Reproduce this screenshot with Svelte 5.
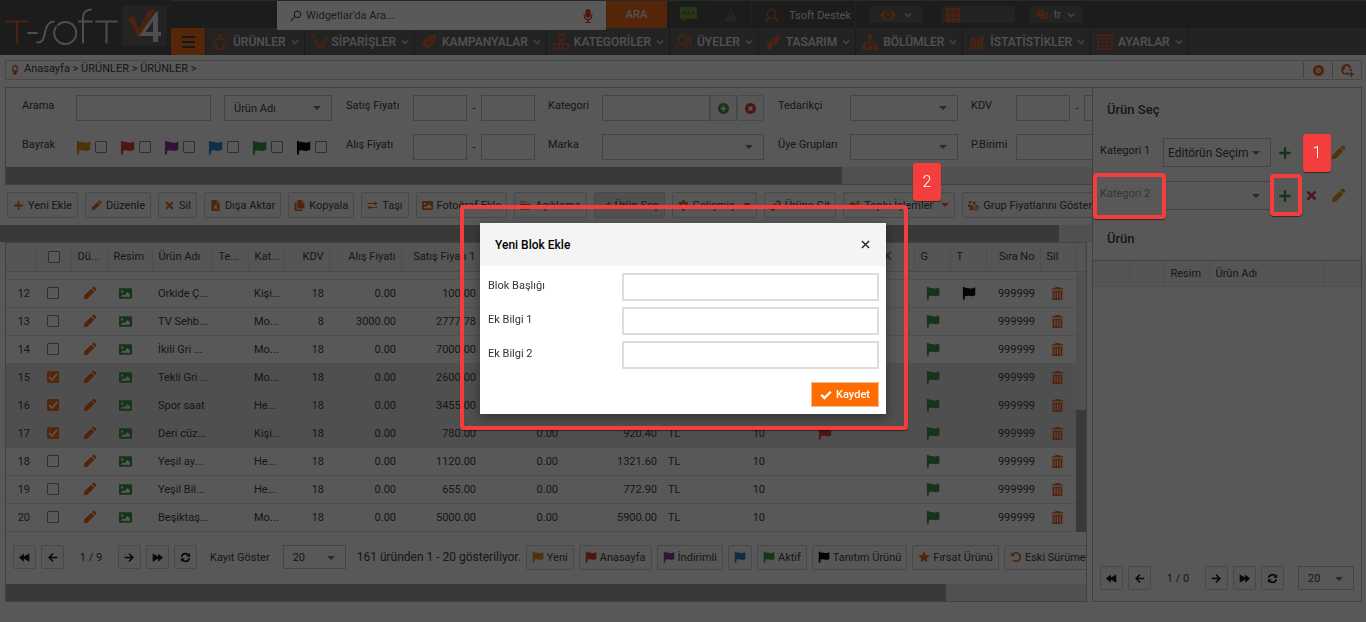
<script lang="ts">
  type Row = {
    no?: number; name: string; cat: string; kdv: string; buy: string; sell: string; price2: string;
    total: string; cur: string; stock: string; order: string; picked?: boolean; red?: boolean; black?: boolean;
  };

  const ICONS: Record<string, string> = {
    flag: 'M1 1h2.200v1.300c2.900-1.200 5 .9 7.900.5 1.500-.2 2.700-.7 4.100-1.300v9c-3 1.400-5 1.300-7.600.7-1.600-.3-3-.1-4.400.5V15.500H1z',
    pen: 'M.8 15.200l.9-4.500 7.600-7.600 3.600 3.600-7.600 7.600zM10.100 2.300l1.300-1.300q.9-.7 1.800 0l1.800 1.800q.7.9 0 1.800l-1.300 1.300z',
    image: 'M1.500 1.500h13q1.500 0 1.500 1.500v10q0 1.500-1.500 1.500h-13Q0 14.500 0 13V3Q0 1.500 1.500 1.500zM4 4a1.500 1.500 0 1 0 .01 0zM2.500 12h11V9l-3-2.800L6.500 10 5 8.800 2.500 11z',
    trash: 'M5.500 0h5l1 1.500H15v1.700H1V1.500h3.500zM2 4.500h12V16H2zM4.200 6v8.500h1.200V6zM7.400 6v8.500h1.200V6zM10.600 6v8.500h1.200V6z',
    plus: 'M6.700 1.500h2.600v5.200h5.200v2.600H9.300v5.200H6.700V9.300H1.500V6.700h5.200z',
    times: 'M2 4.200L4.200 2 8 5.800 11.800 2 14 4.200 10.200 8l3.800 3.800-2.200 2.200L8 10.200 4.200 14 2 11.800 5.800 8z',
    check: 'M.5 8.800L2.700 6.500 6 9.800 13.300 2.500l2.200 2.200L6 14.200z',
    file: 'M2 0h8v4.500h4V16H2zM11 0l3 3.500h-3zM5 7l2 3-2 3.500h1.700L8 11.300l1.300 2.200H11L9 10l2-3H9.300L8 8.800 6.700 7z',
    copy: 'M5 0h6v4h4v8.500H5zM12 0l3 3h-3zM1 3.500h2.800v10.200H12V16H1z',
    swap: 'M1 4.200h10V1.800L15.500 5 11 8.200V5.900H1zM15 10.100H5V7.800L.5 11 5 14.200v-2.400h10z',
    lines: 'M0 2h10v1.700H0zM0 5.500h15v1.700H0zM0 9h10v1.700H0zM0 12.500h15v1.700H0z',
    gear: 'M6.500 0h3l.5 2.300 1.500.8 2.200-.8 1.500 2.600L13.500 6.500v2.400l1.700 1.600-1.500 2.600-2.200-.7-1.500.9L9.500 16h-3L6 13.300l-1.500-.9-2.200.7-1.500-2.600L2.500 8.900V6.500L.8 4.900l1.500-2.600 2.200.8L6 2.300zM8 5.300a2.700 2.700 0 1 0 .01 0z',
    gears: 'M4 3h2.500l.4 1.700 1.600-.5 1.200 2-1.200 1.300v1.400l1.200 1.200-1.200 2-1.600-.4-.4 1.800H4l-.4-1.800-1.600.4-1.200-2L2 8.900V7.500L.8 6.200l1.200-2 1.600.5zM5.200 6.500a1.700 1.700 0 1 0 .01 0zM12 1h2l.3 1 1.300.5-.4 1.600.4 1.600-1.300.4L14 7h-2l-.5-1-1.100-.4.3-1.600-.3-1.500 1.100-.5zM13 3a1 1 0 1 0 .01 0z',
    link: 'M9 1.500q3-2.500 5.500 0t0 5.500l-3 3q-2.500 2-5 0l1.600-1.600q1 .6 1.900-.2l3-3q1-1.300 0-2t-2.200 0L9.500 4.500 7.800 2.700zM7 14.500q-3 2.500-5.500 0T1.500 9l3-3q2.500-2 5 0L7.900 7.600Q7 7 6 7.800l-3 3q-1 1.300 0 2t2.200 0l1.300-1.300 1.700 1.800z',
    group: 'M3 1a2 2 0 1 0 .01 0zM9 2a2.300 2.300 0 1 0 .01 0zM0 6.500h4.500L3.500 10H0zM4.500 8.500Q6 7 8 7.200L7.500 11l1 4H2q0-5 2.500-6.500zM11 7h2l.4 1.500 1.600.2 1 1.800-1 1.200.4 1.600-1.500 1.500-1.500-.3L11 15.500l-1.500-.8-.3-1.800-1-1.200.9-1.700 1.400-.5zM12 10a1.500 1.500 0 1 0 .01 0z',
    first: 'M0 8l7-6v4.500L15 2v12L7 9.500V14z',
    last: 'M16 8L9 2v4.500L1 2v12l8-4.500V14z',
    left: 'M8 1.500L9.600 3 5.900 6.900H15v2.200H5.900L9.600 13 8 14.500 1.500 8z',
    right: 'M8 1.500L6.400 3l3.700 3.900H1v2.200h9.100L6.400 13 8 14.500 14.500 8z',
    sync: 'M1.200 7Q2 1.500 8 1.200q3 0 4.800 2L14.700 1.300V7H9l2-2Q9.800 3.500 8 3.600 4.600 3.700 3.700 7zM14.800 9Q14 14.500 8 14.800q-3 0-4.800-2L1.300 14.700V9H7l-2 2q1.200 1.500 3 1.400 3.400-.1 4.300-3.400z',
    star: 'M8 .5l2.300 4.800 5.200.7-3.800 3.700.9 5.200L8 12.400l-4.600 2.500.9-5.200L.5 6l5.200-.7z',
    undo: 'M1 1.500l2 2Q5 1.500 8 1.300q6.500.5 6.800 6.700-.3 6.400-6.800 6.800-3 0-5-2l1.600-1.600Q6 12.500 8 12.500q4-.3 4.500-4.500Q12 3.900 8 3.600q-2 0-3.400 1.500L6.500 7H1z',
    plusCircle: 'M8 0a8 8 0 1 0 .01 0zM6.800 3.500h2.400v3.300h3.300v2.400H9.200v3.300H6.800V9.200H3.500V6.800h3.300z',
    timesCircle: 'M8 0a8 8 0 1 0 .01 0zM4.300 6L6 4.300l2 2 2-2L11.700 6l-2 2 2 2L10 11.700l-2-2-2 2L4.300 10l2-2z',
    playCircle: 'M8 0a8 8 0 1 0 .01 0zM8 4.500a3.500 3.500 0 1 1-.01 0zM7 6l3.500 2L7 10z',
    pin: 'M8 0q5 .3 5 5.500Q13 9 9.500 16h-3Q3 9 3 5.500 3 .3 8 0zM8 2.500a3 3 0 1 0 .01 0z',
    globe: 'M6.500 0Q11 0 12.800 4l-3 .5L8 2.500 5 3.500l-.5 3L2.500 8l1 3 3 .5 1-2 1.500.5v3Q2 14.500.3 9 0 1 6.500 0zM10 6l3-.5q.5 1.500 0 3H11zM12 9.500h1.700v2.300H16v1.700h-2.300V16H12v-2.500H9.700v-1.700H12z',
    mic: 'M8 0q3 .2 3 2.800v4.400Q11 10 8 10T5 7.200V2.800Q5 .2 8 0zM3 6h1.400v2Q5 11.300 8 11.500 11 11.300 11.600 8V6H13v2.500q-.5 3.500-4.200 4.200V14.500H11V16H5v-1.500h2.200v-1.800Q3.500 12 3 8.500z',
    chat: 'M0 1h16v11H6l-3 3.500V12H0zM3 5.500v2h2v-2zM7 5.500v2h2v-2zM11 5.500v2h2v-2z',
    warn: 'M8 1l7.500 14H.5zM7.200 6v4.500h1.600V6zM7.200 11.800v1.700h1.600v-1.700z',
    eye: 'M0 8q3.500-5 8-5t8 5q-3.500 5-8 5T0 8zM8 4.300a3.700 3.700 0 1 0 .01 0zM8 6.300a1.700 1.700 0 1 1-.01 0z',
    grid: 'M0 0h4.600v4.600H0zM5.700 0h4.600v4.600H5.700zM11.400 0H16v4.600h-4.600zM0 5.700h4.600v4.600H0zM5.700 5.700h4.600v4.600H5.700zM11.400 5.700H16v4.600h-4.600zM0 11.400h4.600V16H0zM5.700 11.400h4.600V16H5.700zM11.400 11.400H16V16h-4.600z',
    lang: 'M0 1h9v4h7v10H6v-4H0zM2.500 3v1.200H5V8h1.300V3zM10.500 7l-2.400 6h1.400l.4-1.200h2.300l.5 1.200h1.400l-2.400-6z',
    tag: 'M8.500 1.500L15 .5l-.5 7L7 15.500 0 9zM12 3a1.300 1.300 0 1 0 .01 0zM5.500 7l-1 1 4 4 1-1zM7.500 5.500l-1 1L10 10l1-1z',
    brush: 'M9.500 4l3-3 1 1L16 1l-1 2.500-1.500 1L14 6l-3 5-2.500-1.500L7 13l-2 3-3-1 .5-3L1 10l2.500-1L6 4.500zM8 5L6 8l2 .8 1.500-2.300z',
    tree: 'M6 0h4v5H8.700v3.500h5V11H16v5h-4.500v-5h1V9.700h-9V11h1v5H0v-5h2.300V8.500h5V5H6zM6 11h4v5H6z',
    stats: 'M1.500 4h4L8 6.500 12 3l-1-1h4v4l-1-1v7H1.500zM3.500 6.500V11H5V6.500zM7 8.500V11h1.500V8.500zM10.500 7v4H12V7zM0 13h16v2.200H0z'
  };

  // outlined icons of the main menu, drawn with strokes
  const LINES: Record<string, string> = {
    shirt: 'M7 2q0-1.500 1.200-1.500T9.400 2Q9.400 3.200 8 3.500v1.700M8 5.200H5L1 8l1.500 3 2-1V15h7v-5l2 1L15 8l-4-2.800z',
    cart: 'M0 1.500h3L5 10h9l1.500-6.500H13M5 12.500h9M6 14.500h.5M12.500 14.500h.5',
    boxes: 'M5.300 1h5.400v5H5.300zM1 9.800h5.400v5H1zM9.600 9.800H15v5H9.600zM8 6v3.500',
    users: 'M6.500 1a4 4.500 0 1 0 .01 0M1 15q0-4.500 3.500-5.200M8.500 9.800q3 .7 3 5.200M11.500 3.500a2.300 2.700 0 1 1 .5 5.500M13 9q2.500.5 2.500 3.500',
    user: 'M8 1a4.500 5 0 1 0 .01 0M2 15.500q0-4.500 3.500-5.300M10.500 10.200q3.500.8 3.500 5.300',
    sliders: 'M1 1h14v14H1zM3.500 4.500h9M3.500 8h9M3.500 11.500h9M9 3v3M6 6.500v3M9 10v3',
    search: 'M10 1.500a4.300 4.300 0 1 1-.01 0M6.500 9L1 14.500'
  };

  const menu = [
    ['shirt', 'ÜRÜNLER'], ['cart', 'SİPARİŞLER'], ['tag', 'KAMPANYALAR'], ['boxes', 'KATEGORİLER'],
    ['users', 'ÜYELER'], ['brush', 'TASARIM'], ['tree', 'BÖLÜMLER'], ['stats', 'İSTATİSTİKLER'], ['sliders', 'AYARLAR']
  ];

  const flagColors = ['yellow', 'red', 'purple', 'blue', 'green', 'black'];

  const tools = [
    { icon: 'plus', label: 'Yeni Ekle' }, { icon: 'pen', label: 'Düzenle' }, { icon: 'times', label: 'Sil' },
    { icon: 'file', label: 'Dışa Aktar' }, { icon: 'copy', label: 'Kopyala' }, { icon: 'swap', label: 'Taşı' },
    { icon: 'image', label: 'Fotoğraf Ekle' }, { icon: 'lines', label: 'Açıklama' },
    { icon: 'check', label: 'Ürün Seç', on: true }, { icon: 'gear', label: 'Gelişmiş', more: true },
    { icon: 'link', label: 'Ürüne Git' }, { icon: 'gears', label: 'Toplu İşlemler', more: true },
    { icon: 'group', label: 'Grup Fiyatlarını Göster' }
  ];

  const legend = [
    ['flag', 'yellow', 'Yeni'], ['flag', 'red', 'Anasayfa'], ['flag', 'purple', 'İndirimli'], ['flag', 'blue', ''],
    ['flag', 'green', 'Aktif'], ['flag', 'black', 'Tanıtım Ürünü'], ['star', 'orange', 'Fırsat Ürünü'],
    ['undo', 'orange', 'Eski Sürüme']
  ];

  const colWidths = [29, 36, 36, 45, 60, 36, 36, 45, 72, 80, 82, 99, 36, 72, 36, 36, 36, 36, 36, 36, 54, 36];

  const base = { kdv: '18', buy: '0.00', price2: '0.00', cur: 'TL', stock: '10', order: '999999' };

  let rows: Row[] = $state([
    // scrolled out, only its lower edge shows under the header
    { name: '', cat: '', kdv: '', buy: '', sell: '', price2: '', total: '', cur: '', stock: '', order: '' },
    { ...base, no: 12, name: 'Orkide Ç...', cat: 'Kişi...', sell: '100.00', total: '118.00', black: true },
    { ...base, no: 13, name: 'TV Sehb...', cat: 'Mo...', kdv: '8', buy: '3000.00', sell: '2777.78', total: '3000.00' },
    { ...base, no: 14, name: 'İkili Gri ...', cat: 'Mo...', sell: '7000.00', total: '8260.00' },
    { ...base, no: 15, name: 'Tekli Gri ...', cat: 'Mo...', sell: '2600.00', total: '3068.00', picked: true },
    { ...base, no: 16, name: 'Spor saat', cat: 'He...', sell: '3455.00', total: '4076.90', picked: true },
    { ...base, no: 17, name: 'Deri cüz...', cat: 'Kişi...', sell: '780.00', total: '920.40', picked: true, red: true },
    { ...base, no: 18, name: 'Yeşil ay...', cat: 'He...', sell: '1120.00', total: '1321.60' },
    { ...base, no: 19, name: 'Yeşil Bil...', cat: 'He...', sell: '655.00', total: '772.90' },
    { ...base, no: 20, name: 'Beşiktaş...', cat: 'Mo...', sell: '5000.00', total: '5900.00' }
  ]);

  let modalOpen = $state(true);
</script>

{#snippet icon(name: string, size: number, tone: string)}
  {#if LINES[name]}
    <svg class="ico line {tone}" width={size} height={size} viewBox="0 0 16 16" aria-hidden="true"><path d={LINES[name]} /></svg>
  {:else}
    <svg class="ico {tone}" width={size} height={size} viewBox="0 0 16 16" aria-hidden="true"><path fill-rule="evenodd" d={ICONS[name]} /></svg>
  {/if}
{/snippet}

{#snippet chevron()}
  <svg class="chev" width="8" height="6" viewBox="0 0 8 6" aria-hidden="true"><path d="M1 1.500L4 4.500 7 1.500" /></svg>
{/snippet}

{#snippet pager(pages: string)}
  <button class="btn square" aria-label="İlk">{@render icon('first', 11, 'dark')}</button>
  <button class="btn square" aria-label="Önceki">{@render icon('left', 11, 'dark')}</button>
  <span class="pages">{pages}</span>
  <button class="btn square" aria-label="Sonraki">{@render icon('right', 11, 'dark')}</button>
  <button class="btn square" aria-label="Son">{@render icon('last', 11, 'dark')}</button>
  <button class="btn square" aria-label="Yenile">{@render icon('sync', 11, 'dark')}</button>
{/snippet}

<div class="page">
  <header class="top">
    <a class="logo" href="#home" aria-label="T-Soft V4">
      <svg width="171" height="55" viewBox="0 0 171 55" aria-hidden="true">
        <g fill="none" stroke-width="2" stroke-linecap="round">
          <path class="logo-orange" d="M6 21.500h22M17 21.500v21" />
          <path class="logo-grey" d="M28 33h9M37 42.500c6 0 7-4 8-10s3-11 9-11M56 27a11 11 0 1 0 9-5q-4 0-7 3M83 42.500V18q0-8 8-8.500M79 21.500h13M96 21.500h21M106.500 21.500v21" />
        </g>
        <rect class="logo-box" x="122" y="6" width="45" height="40" rx="3" />
        <path class="logo-orange-fill" d="M128 18l5-2 6 13L149 10h6l-16 28z" />
        <path class="logo-grey-fill" fill-rule="evenodd" d="M155 13l3-2v21h3v4h-3v6h-5v-6h-14zM153 21l-7.500 11h7.500z" />
      </svg>
    </a>
    <div class="top-main">
      <div class="top-row">
        <form class="search" role="search">
          {@render icon('search', 12, 'ink')}
          <input type="text" placeholder="Widgetlar'da Ara..." aria-label="Widgetlar'da Ara" />
          {@render icon('mic', 14, 'red')}
        </form>
        <button class="go">ARA</button>
        <button class="tile chat" aria-label="Mesajlar">{@render icon('chat', 17, 'lime')}</button>
        <button class="tile" aria-label="Uyarılar">{@render icon('warn', 14, 'faint')}</button>
        <a class="tile user" href="#user">{@render icon('user', 15, 'rust')}<span>Tsoft Destek</span></a>
        <button class="pill" aria-label="Görünüm">{@render icon('eye', 16, 'rust')}{@render chevron()}</button>
        <button class="pill wide" aria-label="Uygulamalar">{@render icon('grid', 14, 'rust')}</button>
        <button class="pill">{@render icon('lang', 11, 'rust')}<span>tr</span>{@render chevron()}</button>
      </div>
      <nav class="menu">
        <button class="burger" aria-label="Menü"><i></i><i></i><i></i></button>
        {#each menu as [name, label]}
          <a href="#{name}">{@render icon(name, 16, 'rust')}<span>{label}</span>{@render chevron()}</a>
        {/each}
      </nav>
    </div>
  </header>

  <div class="crumbs">
    {@render icon('pin', 10, 'rust')}
    <span>Anasayfa &gt; ÜRÜNLER &gt; ÜRÜNLER &gt;</span>
    <button class="crumb-btn" aria-label="Oynat">{@render icon('playCircle', 11, 'orange')}</button>
    <button class="crumb-btn" aria-label="Dil">{@render icon('globe', 13, 'rust')}</button>
  </div>

  <div class="body">
    <main class="left">
      <section class="filter">
        <div class="filter-grid">
          <label for="f-search">Arama</label>
          <div class="cell spread"><input id="f-search" class="box w135" type="text" />
            <span class="select w108"><select aria-label="Arama alanı"><option>Ürün Adı</option></select></span></div>
          <label for="f-sell">Satış Fiyatı</label>
          <div class="cell"><input id="f-sell" class="box w54" type="text" /><i class="dash">-</i><input class="box w54" type="text" aria-label="Satış fiyatı üst" /></div>
          <label for="f-cat">Kategori</label>
          <div class="cell"><input id="f-cat" class="box w108" type="text" /><button class="btn addon" aria-label="Ekle">{@render icon('plusCircle', 11, 'green')}</button><button class="btn addon" aria-label="Temizle">{@render icon('timesCircle', 11, 'red')}</button></div>
          <label for="f-sup">Tedarikçi</label>
          <div class="cell"><span class="select w108"><select id="f-sup"></select></span></div>
          <label for="f-kdv">KDV</label>
          <div class="cell"><input id="f-kdv" class="box w54" type="text" /><i class="dash">-</i><input class="box w54" type="text" aria-label="KDV üst" /></div>

          <span class="lbl">Bayrak</span>
          <div class="cell flags">
            {#each flagColors as color}
              <label class="flag-opt">{@render icon('flag', 15, color)}<input type="checkbox" aria-label={color} /></label>
            {/each}
          </div>
          <label for="f-buy">Alış Fiyatı</label>
          <div class="cell"><input id="f-buy" class="box w54" type="text" /><i class="dash">-</i><input class="box w54" type="text" aria-label="Alış fiyatı üst" /></div>
          <label for="f-brand">Marka</label>
          <div class="cell"><span class="select w162"><select id="f-brand"></select></span></div>
          <label for="f-grp">Üye Grupları</label>
          <div class="cell"><span class="select w108"><select id="f-grp"></select></span></div>
          <label for="f-cur">P.Birimi</label>
          <div class="cell"><span class="select w108"><select id="f-cur"></select></span></div>
        </div>
        <div class="hbar"><div class="thumb" style="width: 77%"></div></div>
      </section>

      <div class="toolbar">
        {#each tools as t}
          <button class="btn tool" class:on={t.on}>{@render icon(t.icon, 11, 'orange')}<span>{t.label}</span>{#if t.more}<i class="caret"></i>{/if}</button>
        {/each}
      </div>
      <div class="hbar"><div class="thumb" style="width: 97%"></div></div>

      <section class="list">
        <table class="head">
          <colgroup>{#each colWidths as w}<col style="width: {w}px" />{/each}<col /></colgroup>
          <thead>
            <tr>
              <th></th><th class="mid"><input type="checkbox" aria-label="Tümünü seç" /></th><th>Dü...</th><th>Resim</th>
              <th>Ürün Adı</th><th>Te...</th><th>Kat...</th><th class="num">KDV</th><th class="num">Alış Fiyatı</th>
              <th class="num">Satış Fiyatı 1</th><th></th><th></th><th></th><th></th><th></th><th></th><th></th>
              <th>K</th><th>G</th><th>T</th><th class="num">Sıra No</th><th>Sil</th><th></th>
            </tr>
          </thead>
        </table>
        <div class="rows-wrap">
          <div class="rows">
            <table>
              <colgroup>{#each colWidths as w}<col style="width: {w}px" />{/each}</colgroup>
              <tbody>
                {#each rows as row}
                  <tr class:picked={row.picked}>
                    <td class="num">{row.no ?? ''}</td>
                    <td class="mid"><input type="checkbox" bind:checked={row.picked} aria-label="Seç" /></td>
                    <td class="mid">{@render icon('pen', 14, 'orange')}</td>
                    <td class="mid">{@render icon('image', 13, 'green')}</td>
                    <td>{row.name}</td>
                    <td></td>
                    <td>{row.cat}</td>
                    <td class="num">{row.kdv}</td>
                    <td class="num">{row.buy}</td>
                    <td class="num">{row.sell}</td>
                    <td class="num">{row.price2}</td>
                    <td class="num">{row.total}</td>
                    <td>{row.cur}</td>
                    <td class="num">{row.stock}</td>
                    <td></td>
                    <td class="mid">{#if row.red}{@render icon('flag', 14, 'red')}{/if}</td>
                    <td></td>
                    <td></td>
                    <td class="mid">{@render icon('flag', 14, 'green')}</td>
                    <td class="mid">{#if row.black}{@render icon('flag', 14, 'black')}{/if}</td>
                    <td class="num">{row.order}</td>
                    <td class="bin">{@render icon('trash', 13, 'orange')}</td>
                  </tr>
                {/each}
              </tbody>
            </table>
          </div>
          <div class="vbar"><div class="vthumb"></div></div>
        </div>
        <div class="pager">
          {@render pager('1 / 9')}
          <label class="per" for="per-page">Kayıt Göster</label>
          <span class="select w63"><select id="per-page"><option>20</option></select></span>
          <span class="summary">161 üründen 1 - 20 gösteriliyor.</span>
          {#each legend as [name, color, label]}
            <button class="btn tag" aria-label={label || color}>{@render icon(name, 12, color)}{#if label}<span>{label}</span>{/if}</button>
          {/each}
        </div>
        <div class="hbar"><div class="thumb" style="width: 87%"></div></div>
      </section>
    </main>

    <aside class="side">
      <h2>Ürün Seç</h2>
      <div class="side-row">
        <label for="cat-1">Kategori 1</label>
        <span class="select big"><select id="cat-1"><option>Editörün Seçim</option></select></span>
        <button class="bare" aria-label="Ekle">{@render icon('plus', 14, 'green')}</button>
        <button class="bare" aria-label="Sil">{@render icon('times', 13, 'red')}</button>
        <button class="bare" aria-label="Düzenle">{@render icon('pen', 15, 'yellow')}</button>
      </div>
      <div class="side-row">
        <label class="pale" for="cat-2">Kategori 2</label>
        <span class="select big"><select id="cat-2"></select></span>
        <button class="bare" aria-label="Ekle">{@render icon('plus', 14, 'green')}</button>
        <button class="bare" aria-label="Sil">{@render icon('times', 13, 'red')}</button>
        <button class="bare" aria-label="Düzenle">{@render icon('pen', 15, 'yellow')}</button>
      </div>
      <h2>Ürün</h2>
      <table class="side-table">
        <colgroup><col style="width: 36px" /><col style="width: 35px" /><col style="width: 45px" /><col style="width: 115px" /><col /></colgroup>
        <thead><tr><th></th><th></th><th>Resim</th><th>Ürün Adı</th><th></th></tr></thead>
      </table>
      <div class="pager side-pager">
        {@render pager('1 / 0')}
        <span class="select w56"><select aria-label="Kayıt Göster"><option>20</option></select></span>
      </div>
    </aside>
  </div>
</div>

{#if modalOpen}
  <div class="overlay">
    <div class="modal" role="dialog" aria-labelledby="modal-title">
      <div class="modal-head">
        <h1 id="modal-title">Yeni Blok Ekle</h1>
        <button class="close" aria-label="Kapat" onclick={() => (modalOpen = false)}>
          <svg width="9" height="9" viewBox="0 0 10 10" aria-hidden="true"><path d="M1 1l8 8M9 1l-8 8" /></svg>
        </button>
      </div>
      <div class="modal-body">
        <label for="m-title">Blok Başlığı</label><input id="m-title" type="text" />
        <label for="m-1">Ek Bilgi 1</label><input id="m-1" type="text" />
        <label for="m-2">Ek Bilgi 2</label><input id="m-2" type="text" />
      </div>
      <div class="modal-foot">
        <button class="save">{@render icon('check', 12, 'white')}<span>Kaydet</span></button>
      </div>
    </div>
  </div>
{/if}

<!-- step markers -->
<div class="mark mark-modal"></div>
<div class="mark mark-cat"></div>
<div class="mark mark-add"></div>
<div class="step step-1">1</div>
<div class="step step-2">2</div>

<style>
  :global(body) { background: #fff; }
  :global(#app) { position: relative; overflow: hidden; }

  .page, .overlay, .step {
    font-family: Roboto, "Liberation Sans", sans-serif; font-size: 11px; color: #444;
  }
  .page { min-height: 100vh; background: #fbfbfb; overflow: hidden; }
  button, input, select { font: inherit; color: inherit; margin: 0; padding: 0; box-sizing: border-box; }
  button { cursor: pointer; background: none; border: none; }
  a { color: inherit; text-decoration: none; }
  i { font-style: normal; }

  .ico { display: block; flex: none; fill: currentColor; }
  .line { fill: none; stroke: currentColor; stroke-width: 1.4; }
  .orange { color: #e8681f; }
  .rust { color: #e0622c; }
  .yellow { color: #e0931f; }
  .red { color: #dc403c; }
  .purple { color: #9437a4; }
  .blue { color: #2c88d2; }
  .green { color: #3c9448; }
  .lime { color: #6f9a3c; }
  .black { color: #0c0c0c; }
  .dark { color: #1c1c1c; }
  .ink { color: #444; }
  .faint { color: #6c6c6c; }
  .white { color: #fff; }

  .chev { fill: none; stroke: #c8c8c8; stroke-width: 1.500; flex: none; }

  /* header */
  .top { display: flex; height: 55px; background: #505050; color: #e8e8e8; }
  .logo { width: 171px; flex: none; }
  .logo-orange { stroke: #e0622c; }
  .logo-orange-fill { fill: #e0622c; }
  .logo-grey { stroke: #e0e0e0; }
  .logo-grey-fill { fill: #e0e0e0; }
  .logo-box { fill: #666; }
  .top-main { flex: 1; min-width: 0; }
  .top-row { display: flex; height: 28px; padding-left: 106px; border-top: 1px solid #777; box-sizing: border-box; }
  .search {
    display: flex; align-items: center; gap: 4px; width: 329px; height: 29px; box-sizing: border-box;
    padding: 0 11px 0 13px; background: #fff; position: relative; z-index: 1;
  }
  .search input { flex: 1; min-width: 0; border: none; outline: none; background: none; }
  .search input::placeholder { color: #555; opacity: 1; }
  .go { width: 61px; background: #f06a1a; font-weight: 500; }
  .tile { display: flex; align-items: center; justify-content: center; width: 42px; border-right: 1px solid #606060; box-sizing: border-box; }
  .tile.chat { width: 43px; }
  .tile.user { width: 104px; gap: 10px; padding: 2px 0 0 8px; }
  .pill {
    display: flex; align-items: center; justify-content: center; gap: 8px; width: 54px; height: 17px;
    margin: 5px 0 0 13px; background: #666; border-radius: 3px;
  }
  .pill ~ .pill { margin-left: 18px; }
  .pill.wide { width: 74px; justify-content: flex-start; padding-left: 5px; }
  .pill:last-child { gap: 6px; margin-left: 14px; }

  .menu { display: flex; height: 27px; background: #666; }
  .burger { display: flex; flex-direction: column; justify-content: center; align-items: center; gap: 3px; width: 34px; background: #f4711f; }
  .burger i { width: 13px; height: 2px; background: #444; }
  .menu a {
    display: flex; align-items: center; gap: 5px; padding: 0 5px 0 6px;
    border-left: 1px solid #4c4c4c; font-size: 12px; font-weight: 500; white-space: nowrap;
  }
  .menu a:last-child { border-right: 1px solid #4c4c4c; }

  /* breadcrumb */
  .crumbs { display: flex; align-items: center; gap: 4px; height: 18px; margin: 5px 4px 7px 5px; padding-left: 4px; border: 1px solid #ccc; }
  .crumbs span { flex: 1; line-height: 16px; padding-bottom: 2px; }
  .crumb-btn { display: flex; align-items: center; justify-content: center; width: 29px; height: 16px; margin-left: -4px; border-left: 1px solid #bbb; }

  .body { display: flex; align-items: stretch; height: 515px; }
  .left { display: flex; flex-direction: column; flex: 1; min-width: 0; overflow: hidden; }

  .box, .select {
    border: 1px solid #c4c4c4; background: #fdfdfd; height: 26px; box-sizing: border-box; outline: none;
  }
  .select { position: relative; display: inline-block; flex: none; }
  .select select { appearance: none; width: 100%; height: 100%; border: none; background: none; outline: none; padding: 0 20px 0 9px; }
  .select::after {
    content: ''; position: absolute; right: 10px; top: 10px;
    border: 4px solid transparent; border-top-color: #777; border-bottom: none; pointer-events: none;
  }
  .w135 { width: 135px; }
  .w108 { width: 108px; }
  .w162 { width: 162px; }
  .w54 { width: 54px; }
  .w63 { width: 63px; }
  .w56 { width: 56px; }

  input[type='checkbox'] {
    appearance: none; display: block; width: 12px; height: 12px; border: 1px solid #888; border-radius: 1px; background: #fff; flex: none;
  }
  input[type='checkbox']:checked {
    border-color: #f4711f;
    background: #f4711f url("data:image/svg+xml,%3Csvg xmlns='http://www.w3.org/2000/svg' viewBox='0 0 12 12'%3E%3Cpath d='M2 6l3 3 5-6' fill='none' stroke='white' stroke-width='1.500'/%3E%3C/svg%3E") center / 12px no-repeat;
  }

  /* filter */
  .filter { border: 1px solid #bbb; border-right: none; margin-left: 5px; }
  .filter-grid {
    display: grid; grid-template-columns: 54px 270px 67px 135px 54px 176px 72px 121px 45px 130px;
    grid-template-rows: 39px 33px; padding: 7px 0 0 16px; align-items: start;
  }
  .filter-grid > label, .lbl { line-height: 22px; white-space: nowrap; }
  .cell { display: flex; align-items: center; height: 26px; }
  .spread { gap: 13px; }
  .dash { width: 14px; text-align: center; }
  .flags { gap: 13px; }
  .flag-opt { display: flex; align-items: center; gap: 4px; }
  .hbar { height: 17px; background: #e5e5e5; flex: none; }
  .thumb { height: 100%; background: #a3a3a3; }

  .btn {
    display: flex; align-items: center; justify-content: center; flex: none;
    border: 1px solid #cfcfcf; border-radius: 2px; background: #fafafa; box-sizing: border-box; white-space: nowrap;
  }
  .addon { width: 27px; height: 26px; }

  .toolbar { display: flex; gap: 7px; padding: 7px 0 7px 7px; }
  .tool { height: 26px; padding: 0 5px; gap: 4px; }
  .tool.on { background: #e4e4e4; }
  .caret { border: 4px solid transparent; border-top-color: #e8681f; border-bottom: none; margin-left: 4px; }

  /* product list */
  .list { display: flex; flex-direction: column; flex: 1; margin: 0 5px; border: 1px solid #bbb; min-height: 0; }
  table { border-collapse: collapse; table-layout: fixed; width: 100%; }
  th, td { padding: 0 5px 0 6px; text-align: left; font-weight: 400; white-space: nowrap; overflow: hidden; box-sizing: border-box; }
  .head th { height: 28px; background: #f2f2f2; border-right: 1px solid #e2e2e2; border-bottom: 1px solid #d5d5d5; }
  .head .num { padding-left: 0; }
  .num { text-align: right; }
  .mid { padding: 0 12px; }
  .bin { padding: 0 11px; }
  .rows-wrap { display: flex; height: 260px; }
  .rows { flex: 1; min-width: 0; display: flex; flex-direction: column; justify-content: flex-end; overflow: hidden; }
  td { height: 28px; border-bottom: 1px solid #e2e2e2; }
  .picked td { background: #e2e2e2; }
  .vbar { display: flex; align-items: flex-end; width: 10px; background: #e5e5e5; }
  .vthumb { width: 100%; height: 122px; background: #a3a3a3; }

  .pager { display: flex; align-items: center; gap: 5px; padding: 13px 0 14px 7px; overflow: hidden; }
  .square { width: 23px; height: 24px; }
  .pages { width: 44px; flex: none; text-align: center; }
  .per { margin: 0 8px; flex: none; white-space: nowrap; }
  .summary { font-size: 12px; flex: none; margin-left: 6px; white-space: nowrap; }
  .pager .select { height: 24px; }
  .tag { height: 25px; padding: 0 5px; gap: 3px; }
  .list .hbar { margin-top: auto; }

  /* side panel */
  .side { display: flex; flex-direction: column; width: 268px; flex: none; margin-right: 4px; border: 1px solid #bbb; background: #fbfbfb; }
  .side h2 { margin: 0; padding: 0 14px; height: 43px; line-height: 43px; font-size: 13px; font-weight: 500; }
  .side-row { display: flex; align-items: center; height: 43px; padding: 0 0 0 7px; }
  .side-row label { width: 63px; padding-bottom: 4px; }
  .side-row .pale { color: #999; }
  .select.big { width: 108px; height: 29px; }
  .big select { font-size: 12px; padding: 0 14px 0 4px; }
  .big::after { top: 12px; }
  .bare { display: flex; justify-content: center; width: 27px; flex: none; }
  .side-table { border-top: 1px solid #bbb; }
  .side-table th { height: 26px; background: #f2f2f2; border-right: 1px solid #e2e2e2; border-bottom: 1px solid #e2e2e2; }
  .side-pager { margin-top: auto; padding: 0 0 11px 7px; }
  .side-pager .select { margin-left: 9px; }

  /* dialog */
  .overlay { position: fixed; inset: 0; z-index: 10; display: flex; justify-content: center; align-items: flex-start; padding-top: 223px; background: rgba(0, 0, 0, 0.65); }
  .modal { width: 406px; background: #fff; box-shadow: 0 4px 12px rgba(0, 0, 0, 0.4); }
  .modal-head { display: flex; align-items: center; justify-content: space-between; height: 43px; padding: 0 16px 0 15px; background: #f4f4f4; }
  .modal-head h1 { margin: 0; font-size: 12px; font-weight: 500; color: #000; }
  .close svg { display: block; fill: none; stroke: #222; stroke-width: 1.500; }
  .modal-body { display: grid; grid-template-columns: 134px 1fr; gap: 6px 0; padding: 7px 7px 7px 8px; }
  .modal-body label { line-height: 26px; color: #333; }
  .modal-body input { width: 100%; height: 28px; border: 2px solid #ddd; background: #fff; outline: none; }
  .modal-foot { display: flex; justify-content: flex-end; padding: 6px 7px 7px; }
  .save { display: flex; align-items: center; justify-content: center; gap: 4px; width: 68px; height: 25px; background: #ff6c00; border: 1px solid #f3b98f; color: #fff; font-weight: 500; }

  /* markers over the page */
  .mark { position: absolute; z-index: 11; box-sizing: border-box; border: 4px solid #f43e3e; border-radius: 4px; box-shadow: 0 1px 1px rgba(0, 0, 0, 0.5); pointer-events: none; }
  .mark-modal { left: 460px; top: 205px; width: 448px; height: 225px; }
  .mark-cat { left: 1093px; top: 173px; width: 73px; height: 46px; }
  .mark-add { left: 1270px; top: 174px; width: 32px; height: 42px; }
  .step {
    position: absolute; z-index: 12; width: 28px; height: 38px; line-height: 38px; text-align: center; border-radius: 3px;
    background: #f43e3e; color: #fff; font-size: 16px; font-weight: 300; box-shadow: 0 1px 1px rgba(0, 0, 0, 0.5);
  }
  .step-1 { left: 1303px; top: 134px; }
  .step-2 { left: 913px; top: 163px; }
</style>
